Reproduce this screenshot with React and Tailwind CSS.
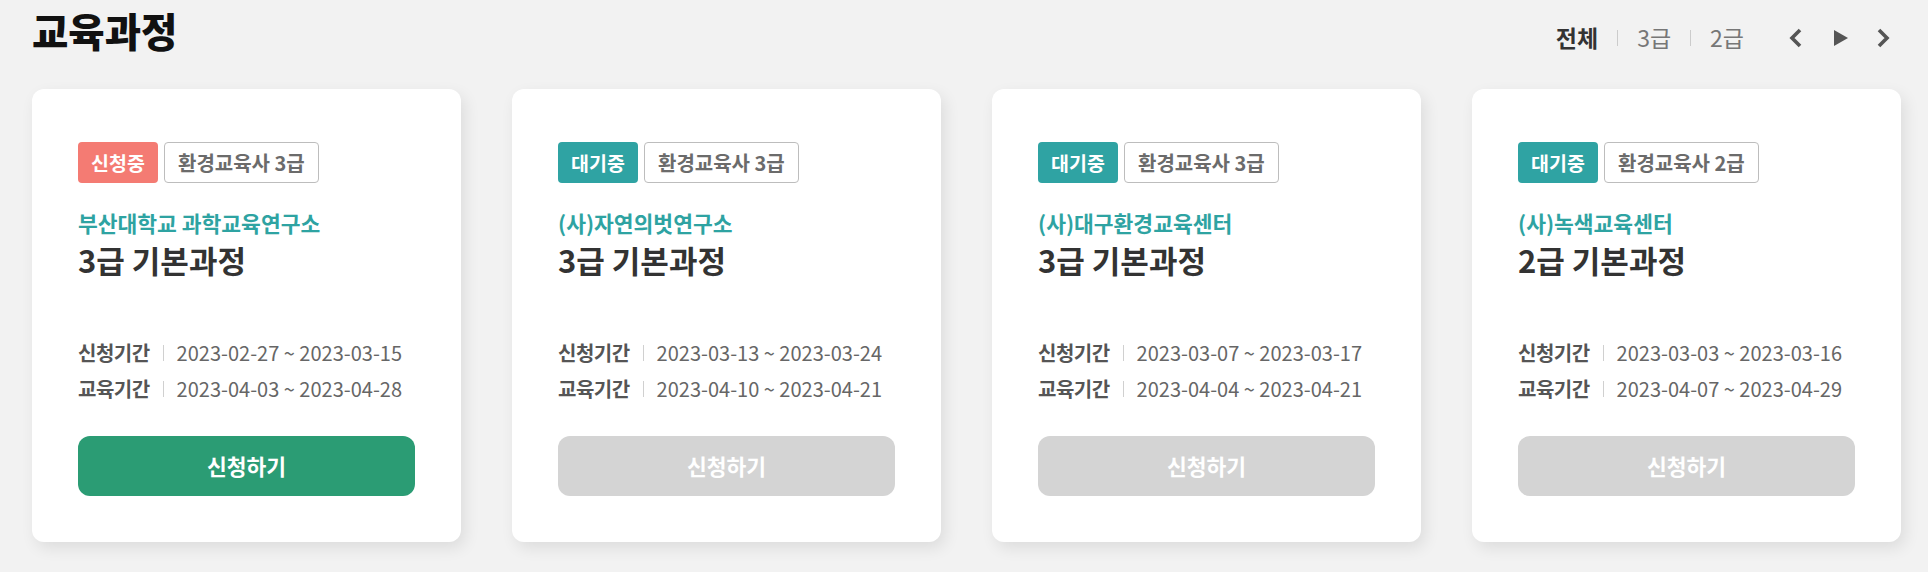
const courses = [
  {
    id: 1,
    status: "신청중",
    open: true,
    grade: "환경교육사 3급",
    org: "부산대학교 과학교육연구소",
    title: "3급 기본과정",
    apply: "2023-02-27 ~ 2023-03-15",
    study: "2023-04-03 ~ 2023-04-28",
  },
  {
    id: 2,
    status: "대기중",
    open: false,
    grade: "환경교육사 3급",
    org: "(사)자연의벗연구소",
    title: "3급 기본과정",
    apply: "2023-03-13 ~ 2023-03-24",
    study: "2023-04-10 ~ 2023-04-21",
  },
  {
    id: 3,
    status: "대기중",
    open: false,
    grade: "환경교육사 3급",
    org: "(사)대구환경교육센터",
    title: "3급 기본과정",
    apply: "2023-03-07 ~ 2023-03-17",
    study: "2023-04-04 ~ 2023-04-21",
  },
  {
    id: 4,
    status: "대기중",
    open: false,
    grade: "환경교육사 2급",
    org: "(사)녹색교육센터",
    title: "2급 기본과정",
    apply: "2023-03-03 ~ 2023-03-16",
    study: "2023-04-07 ~ 2023-04-29",
  },
];

const Period = ({ label, value }) => (
  <div className="flex items-center h-[36px] leading-[36px]">
    <span className="text-[20px] font-bold text-[#555] tracking-[-0.5px]">{label}</span>
    <span className="w-px h-[16px] bg-[#d0d0d0] mx-[13px]" />
    <span className="text-[20px] text-[#666]">{value}</span>
  </div>
);

const CourseCard = ({ course }) => (
  <div className="w-[429px] shrink-0 bg-white rounded-[12px] shadow-[4px_6px_16px_rgba(0,0,0,0.09)] pt-[53px] px-[46px] pb-[46px] flex flex-col">
    <div className="flex gap-[6px] h-[41px]">
      <span
        className={`w-[80px] rounded-[4px] flex items-center justify-center text-[19.5px] font-bold text-white ${
          course.open ? "bg-[#f47b73]" : "bg-[#2fa3a3]"
        }`}
      >
        {course.status}
      </span>
      <span className="px-[13px] rounded-[4px] border border-[#bdbdbd] flex items-center text-[20px] font-bold text-[#6b6b6b]">
        {course.grade}
      </span>
    </div>
    <p className="mt-[26px] text-[21.5px] leading-[28px] font-bold text-[#2ea3a2]">{course.org}</p>
    <h3 className="mt-[5px] text-[31px] leading-[36px] font-bold text-[#333]">{course.title}</h3>
    <div className="mt-[57px]">
      <Period label="신청기간" value={course.apply} />
      <Period label="교육기간" value={course.study} />
    </div>
    <button
      className={`mt-[29px] h-[60px] w-full rounded-[12px] text-[21.5px] font-bold text-white ${
        course.open ? "bg-[#2b9c74]" : "bg-[#d4d4d4]"
      }`}
    >
      신청하기
    </button>
  </div>
);

const Chevron = ({ dir }) => (
  <svg width="16" height="20" viewBox="0 0 16 20" fill="none">
    <path
      d={dir === "left" ? "M12 2 L4 10 L12 18" : "M4 2 L12 10 L4 18"}
      stroke="#555"
      strokeWidth="3.6"
    />
  </svg>
);

export default function App() {
  return (
    <div className="min-h-[572px] bg-[#f2f2f2] pl-[32px] pr-[27px] font-['Noto_Sans_CJK_KR',sans-serif]">
      <div className="h-[89px] flex justify-between items-start">
        <h2 className="pt-[12px] text-[39.5px] leading-[36px] font-black text-[#111]">교육과정</h2>
        <div className="pt-[27px] pr-[10px] flex items-center text-[23px] leading-[21px]">
          <span className="font-bold text-[#333]">전체</span>
          <span className="w-px h-[16px] bg-[#ccc] mx-[19px]" />
          <span className="text-[#777]">3급</span>
          <span className="w-px h-[16px] bg-[#ccc] mx-[19px]" />
          <span className="text-[#777]">2급</span>
          <div className="ml-[44px] flex items-center">
            <Chevron dir="left" />
            <svg className="ml-[29px]" width="16" height="18" viewBox="0 0 16 18">
              <path d="M1 1 L15 9 L1 17 Z" fill="#555" />
            </svg>
            <span className="ml-[26px]">
              <Chevron dir="right" />
            </span>
          </div>
        </div>
      </div>
      <div className="flex gap-[51px]">
        {courses.map((course) => (
          <CourseCard key={course.id} course={course} />
        ))}
      </div>
    </div>
  );
}
